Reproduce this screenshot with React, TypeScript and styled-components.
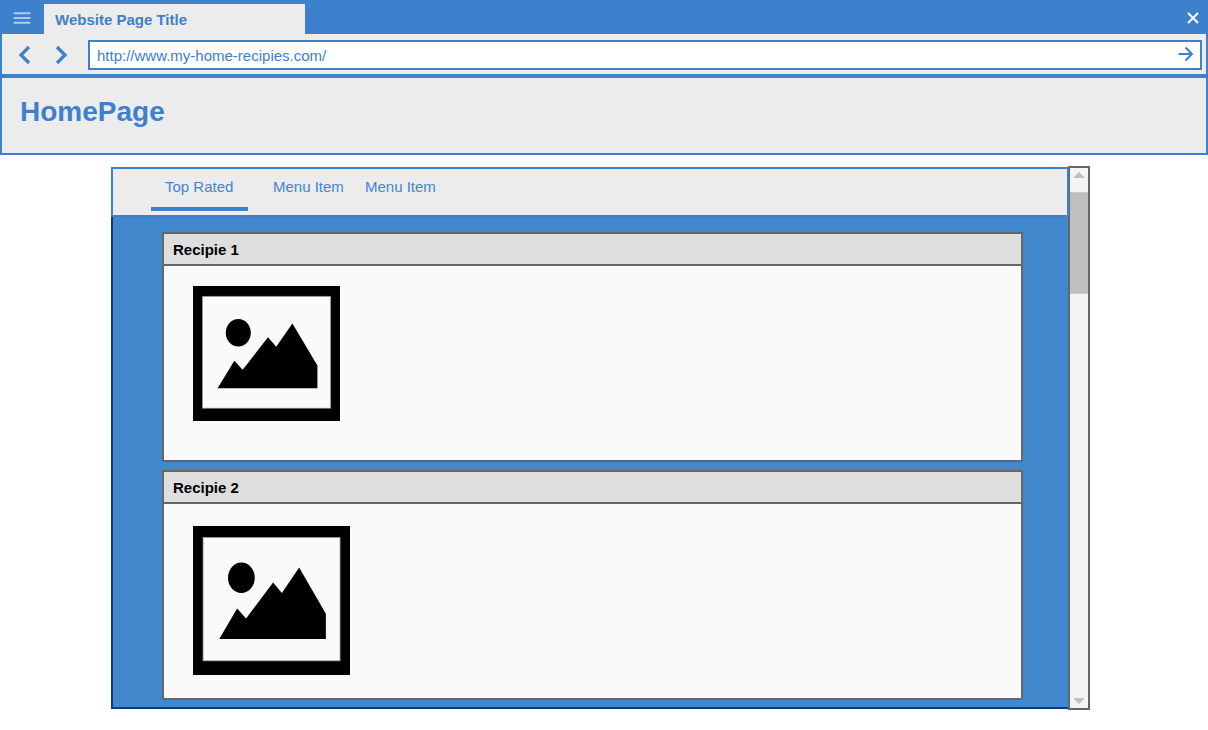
import React from "react";
import styled, { createGlobalStyle } from "styled-components";

const blue = "#3d80cc";
const pale = "#ececec";
const grey = "#666666";

const GlobalStyle = createGlobalStyle`
  * { box-sizing: border-box; }
  body {
    margin: 0;
    background: #fff;
    font-family: "Liberation Sans", Arial, sans-serif;
    font-size: 15px;
    line-height: 18px;
    overflow: hidden;
  }
  svg { display: block; flex: none; }
`;

const Window = styled.div`
  width: 1208px;
  height: 730px;
  display: flex;
  flex-direction: column;
`;

const TitleBar = styled.div`
  height: 34px;
  flex: none;
  display: flex;
  align-items: flex-end;
  background: ${blue};
`;

const MenuButton = styled.button`
  width: 44px;
  height: 34px;
  padding: 0 0 0 13px;
  border: 0;
  background: none;
`;

const PageTab = styled.div`
  width: 261px;
  height: 30px;
  padding: 7px 11px 0;
  background: ${pale};
  color: ${blue};
  font-weight: bold;
`;

const CloseButton = styled.button`
  width: 30px;
  height: 34px;
  margin-left: auto;
  padding: 0;
  border: 0;
  background: none;
`;

const Toolbar = styled.div`
  height: 42px;
  flex: none;
  display: flex;
  align-items: center;
  border: solid ${blue};
  border-width: 0 2px 2px;
  padding: 0 4px 0 8px;
  background: ${pale};
`;

const NavButton = styled.button`
  width: 36px;
  height: 40px;
  padding: 0;
  border: 0;
  background: none;
`;

const AddressBar = styled.div`
  flex: 1;
  height: 30px;
  margin: 2px 0 0 6px;
  display: flex;
  justify-content: space-between;
  border: 2px solid ${blue};
  background: #fff;
  color: ${blue};
  padding: 0 0 0 7px;
  line-height: 27px;
`;

const PageHeader = styled.header`
  height: 79px;
  flex: none;
  padding: 18px 18px 0;
  border: 2px solid ${blue};
  background: ${pale};
`;

const Heading = styled.h1`
  margin: 0;
  color: ${blue};
  font-size: 28px;
  line-height: 32px;
`;

const Content = styled.main`
  display: flex;
  align-items: flex-start;
  margin: 11px 0 0 111px;
`;

const Panel = styled.section`
  width: 958px;
  height: 542px;
  margin: 1px -1px 0 0;
  display: flex;
  flex-direction: column;
  z-index: 1;
`;

const TabMenu = styled.nav`
  height: 50px;
  flex: none;
  display: flex;
  padding-left: 38px;
  border: 2px solid ${blue};
  background: ${pale};
`;

const MenuItem = styled.a<{ $active?: boolean; $width: number }>`
  width: ${(p) => p.$width}px;
  height: 42px;
  padding: ${(p) => (p.$active ? "9px 0 0 14px" : "9px 0 0 0")};
  border-bottom: 4px solid ${(p) => (p.$active ? blue : "transparent")};
  margin-right: ${(p) => (p.$active ? 25 : 21)}px;
  color: #4285d1;
  white-space: nowrap;
`;

const RecipeList = styled.div`
  width: 957px;
  flex: 1;
  display: flex;
  flex-direction: column;
  gap: 8px;
  padding: 15px 45px 0 49px;
  border: solid #1a3480;
  border-width: 0 0 2px 2px;
  background: #4288cc;
`;

const Card = styled.article`
  height: 230px;
  border: 2px solid ${grey};
  background: #fafafa;
`;

const CardTitle = styled.h2`
  height: 32px;
  margin: 0;
  padding: 7px 9px 0;
  border-bottom: 2px solid ${grey};
  background: #dedede;
  color: #000;
  font-size: 15px;
  line-height: 18px;
`;

const CardBody = styled.div<{ $top: number }>`
  padding: ${(p) => p.$top}px 0 0 29px;
`;

const ScrollBar = styled.div`
  width: 22px;
  height: 544px;
  display: flex;
  flex-direction: column;
  justify-content: space-between;
  border: 2px solid ${grey};
  background: #f4f4f4;
`;

const ScrollTop = styled.div`
  display: flex;
  flex-direction: column;
`;

const ScrollArrow = styled.div<{ $height: number; $top: number }>`
  height: ${(p) => p.$height}px;
  padding: ${(p) => p.$top}px 0 0 4px;
`;

const Thumb = styled.div`
  height: 102px;
  border: solid #cacaca;
  border-width: 1px 0;
  background: #bfbfbf;
`;

function Picture({ width, height }: { width: number; height: number }) {
  return (
    <svg width={width} height={height} viewBox="0 0 147 135" preserveAspectRatio="none">
      <rect width="147" height="135" fill="#000" />
      <rect x="9.4" y="10.3" width="128.3" height="111.9" fill="#fafafa" stroke="#909090" strokeWidth="0.7" />
      <ellipse cx="45.3" cy="46.8" rx="12.5" ry="13.8" />
      <path d="M24.6 102.3 41.3 74.7 49.7 83.7 75 51.3 83.2 60.7 99.4 37.5 124.4 79.4V102.3Z" />
    </svg>
  );
}

const recipes = [
  { title: "Recipie 1", top: 20, width: 147, height: 135 },
  { title: "Recipie 2", top: 22, width: 157, height: 149 },
];

export default function App() {
  return (
    <>
      <GlobalStyle />
      <Window>
        <TitleBar>
          <MenuButton aria-label="Menu">
            <svg width="18" height="34" stroke="#b1cbea" strokeWidth="2">
              <path d="M.7 13.3H17.3M.7 18H17.3M.7 22.7H17.3" />
            </svg>
          </MenuButton>
          <PageTab>Website Page Title</PageTab>
          <CloseButton aria-label="Close">
            <svg width="30" height="34" fill="none" stroke="#fff" strokeWidth="1.9">
              <path d="M10 13 20 23M20 13 10 23" />
            </svg>
          </CloseButton>
        </TitleBar>
        <Toolbar>
          <NavButton aria-label="Back">
            <svg width="36" height="40" fill="none" stroke={blue} strokeWidth="3.2">
              <path d="M19 13 11 21 19 29" />
            </svg>
          </NavButton>
          <NavButton aria-label="Forward">
            <svg width="36" height="40" fill="none" stroke={blue} strokeWidth="3.2">
              <path d="M11 13 19 21 11 29" />
            </svg>
          </NavButton>
          <AddressBar>
            <span>http://www.my-home-recipies.com/</span>
            <svg width="24" height="26" fill="none" stroke={blue} strokeWidth="2">
              <path d="M2.5 12H16M9.5 5.5 16 12 9.5 18.5" />
            </svg>
          </AddressBar>
        </Toolbar>
        <PageHeader>
          <Heading>HomePage</Heading>
        </PageHeader>
        <Content>
          <Panel>
            <TabMenu>
              <MenuItem $active $width={97}>Top Rated</MenuItem>
              <MenuItem $width={71}>Menu Item</MenuItem>
              <MenuItem $width={71}>Menu Item</MenuItem>
            </TabMenu>
            <RecipeList>
              {recipes.map((r) => (
                <Card key={r.title}>
                  <CardTitle>{r.title}</CardTitle>
                  <CardBody $top={r.top}>
                    <Picture width={r.width} height={r.height} />
                  </CardBody>
                </Card>
              ))}
            </RecipeList>
          </Panel>
          <ScrollBar>
            <ScrollTop>
              <ScrollArrow $height={24} $top={4}>
                <svg width="10" height="6" fill="#bfbfbf">
                  <path d="M0 5V6H10V5L5 0Z" />
                </svg>
              </ScrollArrow>
              <Thumb />
            </ScrollTop>
            <ScrollArrow $height={10} $top={0}>
              <svg width="10" height="6" fill="#bfbfbf">
                <path d="M0 0H10V1L5 6 0 1Z" />
              </svg>
            </ScrollArrow>
          </ScrollBar>
        </Content>
      </Window>
    </>
  );
}
